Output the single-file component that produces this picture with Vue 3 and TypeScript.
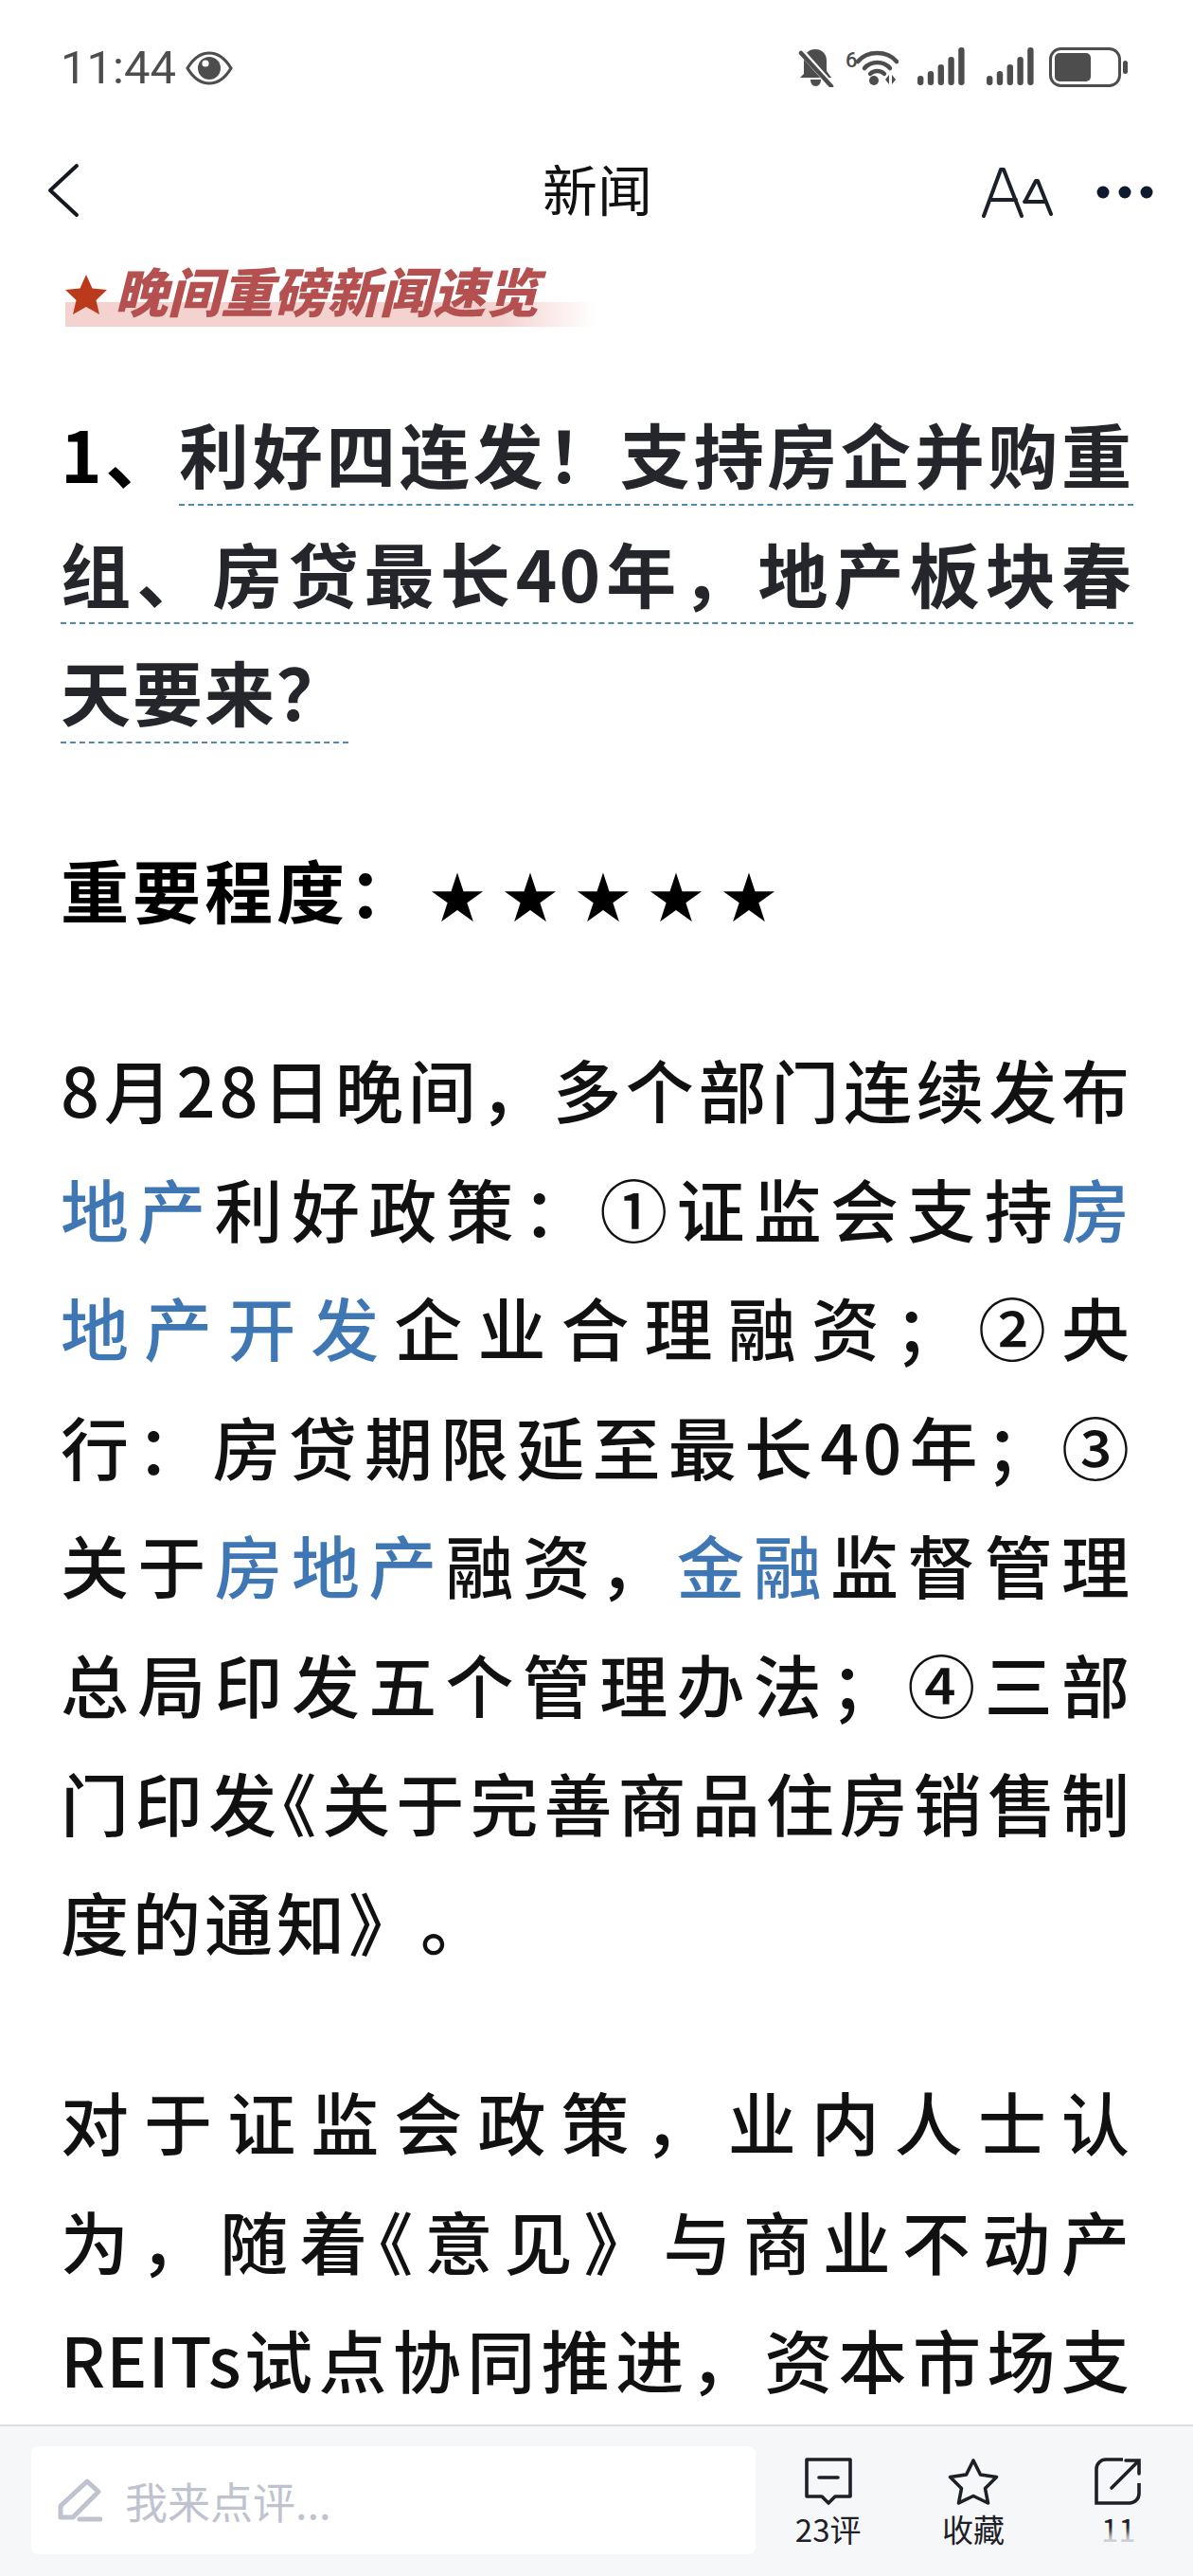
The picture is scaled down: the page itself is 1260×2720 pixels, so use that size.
<template>
  <div class="page">
    <div class="status-bar">
      <div class="status-left">
        <span class="clock">11:44</span>
        <svg class="eye" width="50" height="36" viewBox="0 0 50 36">
          <path d="M2 18C8 8 16 2 25 2s17 6 23 16c-6 10-14 16-23 16S8 28 2 18Z" fill="none" stroke="#4d4d4d" stroke-width="3.2" />
          <circle cx="25" cy="18" r="12" fill="#4d4d4d" />
          <circle cx="21" cy="13" r="3.6" fill="#fff" />
        </svg>
      </div>
      <div class="status-right">
        <svg width="38" height="42" viewBox="0 0 38 42">
          <path d="M18 2c8 0 12 6 12 12v11l5 7H2l4-4V14C6 8 10 2 18 2Z" fill="#4d4d4d" />
          <path d="M13 34h11c0 4-2 7-5.500 7S13 38 13 34Z" fill="#4d4d4d" />
          <path d="M2 3l33 37" stroke="#fff" stroke-width="7" />
          <path d="M3 6l32 35" stroke="#4d4d4d" stroke-width="4.500" stroke-linecap="round" />
        </svg>
        <svg class="wifi" width="56" height="40" viewBox="0 0 56 40">
          <text x="0" y="21" class="wifi-six">6</text>
          <path d="M13 15C23 3 44 3 54 15" fill="none" stroke="#4d4d4d" stroke-width="4.500" stroke-linecap="round" />
          <path d="M20 22C27 14 40 14 47 22" fill="none" stroke="#4d4d4d" stroke-width="4.500" stroke-linecap="round" />
          <path d="M26 28C30 24 37 24 41 28" fill="none" stroke="#4d4d4d" stroke-width="4.500" stroke-linecap="round" />
          <circle cx="30" cy="35" r="5" fill="#4d4d4d" />
          <path d="M42 34l4-5v10ZM49 29l4 5-4 5Z" fill="#4d4d4d" />
        </svg>
        <svg v-for="n in 2" :key="n" class="signal" width="50" height="40" viewBox="0 0 50 40">
          <rect v-for="(h, i) in bars" :key="i" :x="i * 10.8" :y="40 - h" width="6.400" :height="h" rx="3.200" fill="#4d4d4d" />
        </svg>
        <svg class="battery" width="84" height="42" viewBox="0 0 84 42">
          <rect x="1.500" y="1.500" width="73" height="39" rx="11" fill="none" stroke="#4d4d4d" stroke-width="3" />
          <rect x="6" y="6" width="38" height="30" rx="5" fill="#4d4d4d" />
          <rect x="78" y="14" width="5" height="14" rx="2.500" fill="#4d4d4d" />
        </svg>
      </div>
    </div>

    <div class="nav-bar">
      <div class="nav-side">
        <svg width="34" height="58" viewBox="0 0 34 58">
          <path d="M31 3 3 29l28 26" fill="none" stroke="#15181f" stroke-width="4" stroke-linecap="round" stroke-linejoin="round" />
        </svg>
      </div>
      <div class="nav-title">新闻</div>
      <div class="nav-side nav-right">
        <svg width="76" height="54" viewBox="0 0 76 54">
          <path d="M3 52 21 3h3l19 49M10 35h27" fill="none" stroke="#1c2029" stroke-width="4" stroke-linecap="round" stroke-linejoin="round" />
          <path d="M47 36 58 15h2l14 35M46 37h22" fill="none" stroke="#1c2029" stroke-width="4" stroke-linecap="round" stroke-linejoin="round" />
        </svg>
        <svg width="60" height="14" viewBox="0 0 60 14">
          <circle cx="7" cy="7" r="6.500" fill="#0f1a2e" />
          <circle cx="30" cy="7" r="6.500" fill="#0f1a2e" />
          <circle cx="53" cy="7" r="6.500" fill="#0f1a2e" />
        </svg>
      </div>
    </div>

    <div class="banner">
      <svg width="44" height="42" viewBox="0 0 44 42">
        <path d="M22 0l6.500 14.500L44 16 32.500 27 36 42 22 34 8 42l3.500-15L0 16l15.500-1.500Z" fill="#bb3a1c" />
      </svg>
      <span class="banner-text">晚间重磅新闻速览</span>
    </div>

    <div class="article">
      <h1 class="headline">
        <div v-for="(line, i) in headline" :key="i" class="line" :class="{ loose: line.free }">
          <span v-if="line.lead" class="lead">{{ line.lead }}</span><span class="dashed">{{ line.text }}</span>
        </div>
      </h1>

      <div class="rating">重要程度：<span class="stars">★★★★★</span></div>

      <div v-for="(para, p) in paragraphs" :key="p" class="para">
        <div v-for="(line, i) in para" :key="i" class="line" :class="{ loose: line.free }">
          <span v-for="(seg, s) in line.segs" :key="s" :class="{ link: seg.link, halt: seg.halt, latin: seg.latin }">{{ seg.t }}</span>
        </div>
      </div>
    </div>

    <div class="bottom-bar">
      <div class="comment-input">
        <svg width="48" height="46" viewBox="0 0 48 46">
          <path d="M32 3 44 14 17 41H4V29Z" fill="none" stroke="#bfc3cf" stroke-width="5" stroke-linejoin="round" />
          <path d="M24 43h22" stroke="#bfc3cf" stroke-width="5" stroke-linecap="round" />
        </svg>
        <span>我来点评...</span>
      </div>
      <div class="action">
        <svg width="50" height="50" viewBox="0 0 50 50">
          <path d="M2 2h46v39H32l-7 7-7-7H2Z" fill="none" stroke="#1e2027" stroke-width="3.600" stroke-linejoin="round" />
          <path d="M15 21h20" stroke="#1e2027" stroke-width="3.600" stroke-linecap="round" />
        </svg>
        <span>23评</span>
      </div>
      <div class="action">
        <svg width="54" height="50" viewBox="0 0 54 50">
          <path d="M27 3l7.500 15 17 2.500-12 12 3 15.500-15.500-7.500-15.500 7.500 3-15.500-12-12 17-2.500Z" fill="none" stroke="#1e2027" stroke-width="3.600" stroke-linejoin="round" />
        </svg>
        <span>收藏</span>
      </div>
      <div class="action">
        <svg width="50" height="50" viewBox="0 0 50 50">
          <path d="M47 27v11a10 10 0 0 1-10 10H2V12A10 10 0 0 1 12 2h18" fill="none" stroke="#1e2027" stroke-width="3.600" />
          <path d="M18 32 46 4M33 3h14v14" fill="none" stroke="#1e2027" stroke-width="3.600" stroke-linecap="round" />
        </svg>
        <span>11</span>
        <div class="smudge"></div>
      </div>
    </div>
  </div>
</template>

<script setup lang="ts">
interface Seg { t: string; link?: boolean; halt?: boolean; latin?: boolean }
interface BodyLine { segs: Seg[]; free?: boolean }

const bars = [10, 15, 22, 30, 40]

const headline = [
  { lead: '1、', text: '利好四连发！支持房企并购重' },
  { lead: '', text: '组、房贷最长40年，地产板块春' },
  { lead: '', text: '天要来？', free: true },
]

const plain = (t: string): BodyLine => ({ segs: [{ t }] })

const paragraphs: BodyLine[][] = [
  [
    plain('8月28日晚间，多个部门连续发布'),
    { segs: [{ t: '地产', link: true }, { t: '利好政策：①证监会支持' }, { t: '房', link: true }] },
    { segs: [{ t: '地产开发', link: true }, { t: '企业合理融资；②央' }] },
    plain('行：房贷期限延至最长40年；③'),
    { segs: [{ t: '关于' }, { t: '房地产', link: true }, { t: '融资，' }, { t: '金融', link: true }, { t: '监督管理' }] },
    plain('总局印发五个管理办法；④三部'),
    { segs: [{ t: '门印发' }, { t: '《', halt: true }, { t: '关于完善商品住房销售制' }] },
    { segs: [{ t: '度的通知》。' }], free: true },
  ],
  [
    plain('对于证监会政策，业内人士认'),
    { segs: [{ t: '为，随着' }, { t: '《', halt: true }, { t: '意见》与商业不动产' }] },
    { segs: [{ t: 'REITs', latin: true }, { t: '试点协同推进，资本市场支' }] },
  ],
]
</script>

<style>
html, body {
  margin: 0;
  background: #fff;
}
</style>

<style scoped>
.page {
  width: 1260px;
  height: 2720px;
  display: flex;
  flex-direction: column;
  overflow: hidden;
  background: #fff;
  font-family: "Noto Sans CJK SC", "Noto Sans", sans-serif;
  color: #111;
}

.status-bar {
  flex: none;
  height: 145px;
  box-sizing: border-box;
  padding: 50px 68px 0 64px;
  display: flex;
  justify-content: space-between;
  align-items: flex-start;
}

.status-left {
  display: flex;
  align-items: center;
  gap: 10px;
  height: 44px;
}

.clock {
  font-family: Roboto, sans-serif;
  font-size: 49px;
  color: #4d4d4d;
  line-height: 44px;
}

.status-right {
  display: flex;
  align-items: flex-start;
  gap: 12px;
}

.wifi-six {
  font-family: Roboto, sans-serif;
  font-size: 22px;
  font-weight: 500;
  fill: #4d4d4d;
}

.signal {
  margin-left: 8px;
}

.signal + .signal {
  margin-left: 11px;
}

.battery {
  margin-left: 4px;
}

.nav-bar {
  flex: none;
  height: 116px;
  box-sizing: border-box;
  padding: 0 42px 0 50px;
  display: grid;
  grid-template-columns: 1fr auto 1fr;
  align-items: center;
}

.nav-title {
  font-size: 58px;
  color: #111;
  line-height: 1;
  margin: -10px 6px 0 0;
}

.nav-right {
  display: flex;
  justify-content: flex-end;
  align-items: center;
  gap: 46px;
}

.banner {
  flex: none;
  margin: 16px 0 0 69px;
  width: 560px;
  height: 68px;
  display: flex;
  align-items: center;
  gap: 8px;
  background: linear-gradient(90deg, #f3d2d0 0%, #f3d2d0 82%, rgba(243, 210, 208, 0) 100%) no-repeat left bottom / 100% 26px;
}

.banner-text {
  font-size: 56px;
  font-weight: 900;
  font-style: italic;
  line-height: 60px;
  margin-top: -10px;
  color: #b4504f;
  filter: blur(0.6px);
}

.article {
  flex: 1;
  min-height: 0;
  padding: 0 63px 0 64px;
  font-size: 72px;
  font-weight: 500;
  line-height: 125.5px;
  letter-spacing: 4px;
  text-spacing-trim: space-all;
}

.line {
  height: 125.5px;
  white-space: nowrap;
  text-align: justify;
  text-align-last: justify;
}

.line.loose {
  text-align-last: left;
}

.headline {
  margin: 70px 0 0;
  font-size: 74px;
  font-weight: 700;
  color: #25262b;
  letter-spacing: 2px;
}

.lead {
  color: #000;
}

.dashed {
  text-decoration: underline dashed #4e8bab 2px;
  text-underline-offset: 22px;
  text-decoration-skip-ink: none;
}

.rating {
  margin-top: 83px;
  height: 125.5px;
  font-weight: 700;
  color: #000;
}

.stars {
  display: inline-block;
  margin-left: 10px;
  font-size: 58px;
  font-weight: 400;
  letter-spacing: 19px;
}

.para {
  margin-top: 86px;
}

.link {
  color: #3f77b4;
}

.halt {
  font-feature-settings: "halt";
}

.latin {
  letter-spacing: 1px;
}

.bottom-bar {
  flex: none;
  height: 160px;
  box-sizing: border-box;
  border-top: 2px solid #dcdee3;
  background: #f6f7f9;
  padding: 21px 2px 23px 33px;
  display: flex;
}

.comment-input {
  width: 765px;
  box-sizing: border-box;
  padding: 0 0 0 27px;
  background: #fff;
  border-radius: 8px;
  display: flex;
  align-items: center;
  gap: 24px;
  font-size: 45px;
  color: #bfc3cf;
}

.action {
  flex: 1;
  position: relative;
  padding-top: 12px;
  display: flex;
  flex-direction: column;
  align-items: center;
  font-size: 33px;
  color: #1e2027;
}

.action span {
  margin-top: 3px;
  line-height: 44px;
}

.smudge {
  position: absolute;
  left: 22px;
  right: 8px;
  top: 92px;
  height: 40px;
  background: rgba(246, 247, 249, 0.85);
  filter: blur(5px);
}
</style>
